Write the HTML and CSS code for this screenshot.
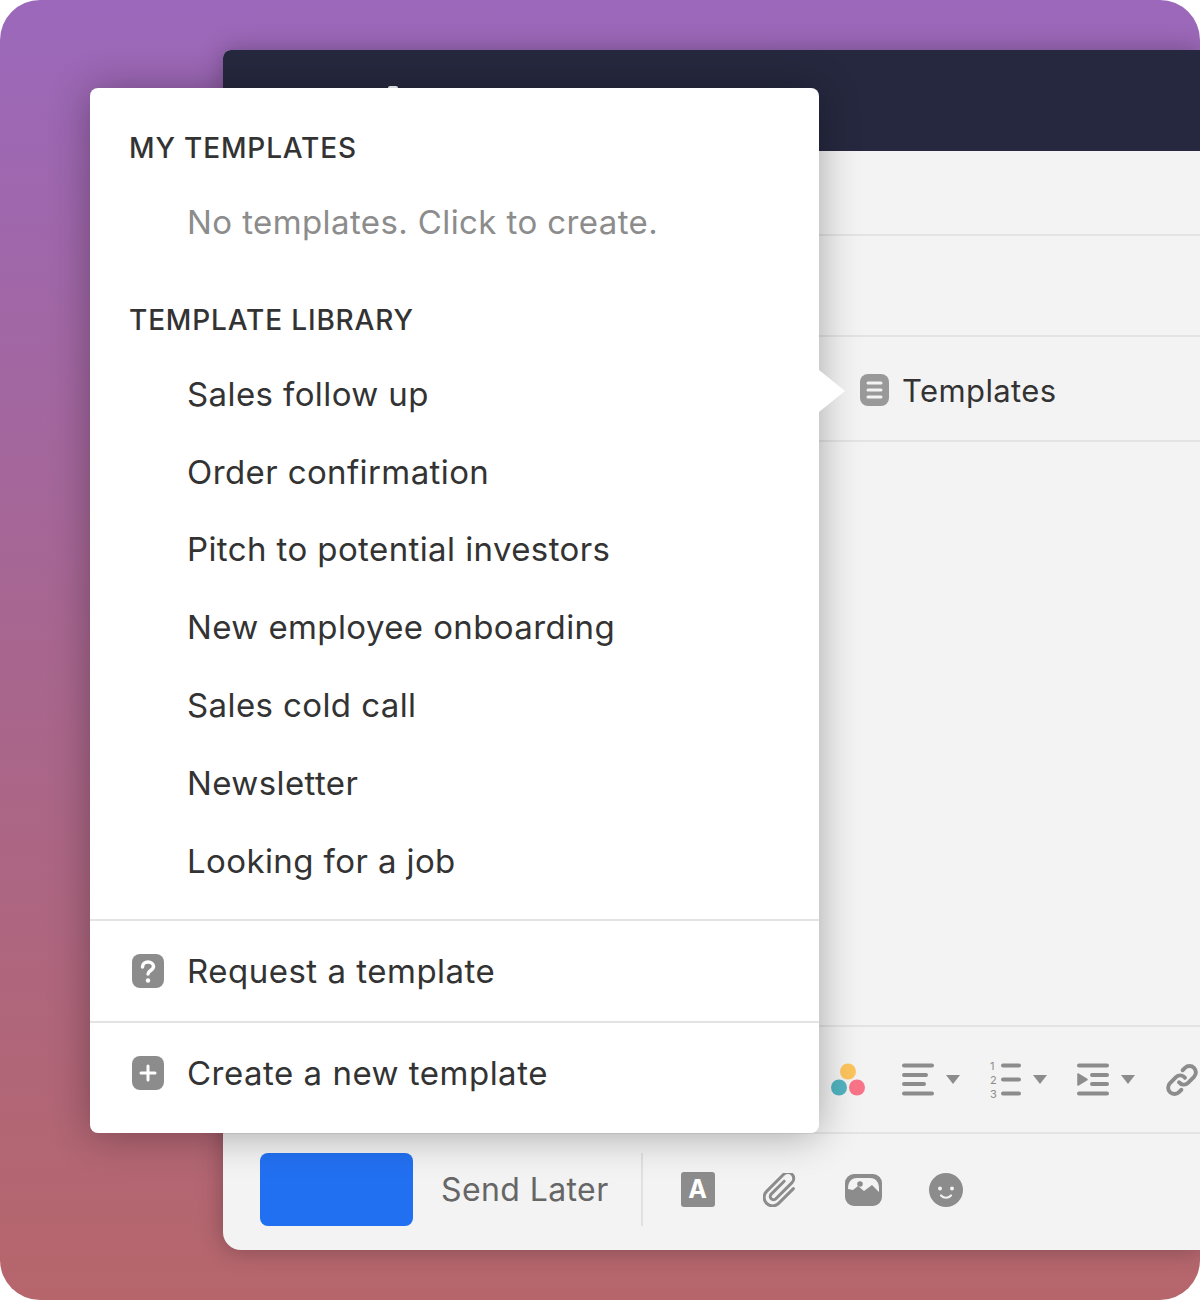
FILE: index.html

```html
<!DOCTYPE html>
<html lang="en">
<head>
    <meta charset="UTF-8">
    <meta name="viewport" content="width=device-width, initial-scale=1.0">
    <title>Templates</title>
    <link rel="stylesheet" href="styles.css">
</head>
<body>
    <div class="stage">
        <div class="window">
            <div class="titlebar"></div>
            <div class="row row-to"></div>
            <div class="row row-subject"></div>
            <div class="row row-templates">
                <svg class="templates-icon" width="29" height="32" viewBox="0 0 29 32">
                    <rect width="29" height="32" rx="8" fill="#999"/>
                    <path d="M8 9h13M8 16h13M8 23h13" stroke="#f3f3f3" stroke-width="3" stroke-linecap="round"/>
                </svg>
                <span>Templates</span>
            </div>
            <div class="row body"></div>
            <div class="row toolbar">
                <svg width="36" height="33" viewBox="0 0 36 33">
                    <circle cx="18" cy="8.500" r="8" fill="#fdc55e"/>
                    <circle cx="9" cy="24.500" r="8" fill="#51b4c0"/>
                    <circle cx="27" cy="24.500" r="8" fill="#f97489"/>
                </svg>
                <div class="tool">
                    <svg width="34" height="33" viewBox="0 0 34 33">
                        <path d="M2 2.500h28M2 12h22M2 21h20M2 30.500h28" stroke="#8c8c8c" stroke-width="4" stroke-linecap="round"/>
                    </svg>
                    <i class="caret"></i>
                </div>
                <div class="tool">
                    <div class="numbers"><span>1</span><span>2</span><span>3</span></div>
                    <svg width="22" height="33" viewBox="0 0 22 33">
                        <path d="M2 2.500h16M2 16.500h16M2 30.500h16" stroke="#8c8c8c" stroke-width="4" stroke-linecap="round"/>
                    </svg>
                    <i class="caret"></i>
                </div>
                <div class="tool">
                    <svg width="34" height="33" viewBox="0 0 34 33">
                        <path d="M2 2.500h28M15 12h15M15 21h15M2 30.500h28" stroke="#8c8c8c" stroke-width="4" stroke-linecap="round"/>
                        <path d="M1 11l9 5.500L1 22z" fill="#8c8c8c" stroke="#8c8c8c" stroke-width="1.500" stroke-linejoin="round"/>
                    </svg>
                    <i class="caret"></i>
                </div>
                <svg class="link-icon" width="36" height="36" viewBox="0 0 24 24" fill="none" stroke="#8c8c8c" stroke-width="2.600" stroke-linecap="round">
                    <path d="M10 13.500a4 4 0 0 0 6 .4l4-4a4.200 4.200 0 0 0-6-6l-1.600 1.600"/>
                    <path d="M14 10.500a4 4 0 0 0-6-.4l-4 4a4.200 4.200 0 0 0 6 6l1.600-1.600"/>
                </svg>
            </div>
            <div class="footer">
                <div class="send-button"></div>
                <span class="send-later">Send Later</span>
                <div class="divider"></div>
                <div class="attach">
                    <div class="format-icon">A</div>
                    <svg width="34" height="34" viewBox="4 4 26 26" fill="none" stroke="#8c8c8c" stroke-width="2.300" stroke-linecap="round" stroke-linejoin="round">
                        <path transform="rotate(45 17 17)" d="M23.500 9v16a6.500 6.500 0 0 1-13 0V6.500a4.500 4.500 0 0 1 9 0V24a2.500 2.500 0 0 1-5 0V10"/>
                    </svg>
                    <svg class="picture-icon" width="37" height="32" viewBox="0 0 37 32">
                        <rect x="1" y="1" width="35" height="30" rx="8" fill="#8c8c8c" stroke="#8c8c8c" stroke-width="2"/>
                        <path d="M3 15c0-7 3-11 9-11h13c6 0 9 4 9 11v3l-7-7-8 6-6-5-5 4-5-1z" fill="#f3f3f3"/>
                        <circle cx="15" cy="10" r="2.800" fill="#8c8c8c"/>
                    </svg>
                    <svg width="34" height="34" viewBox="0 0 34 34">
                        <circle cx="17" cy="17" r="17" fill="#8c8c8c"/>
                        <circle cx="11" cy="15.500" r="2" fill="#f3f3f3"/>
                        <circle cx="23" cy="15.500" r="2" fill="#f3f3f3"/>
                        <path d="M12 22.500c3 3 7 3 10 0" fill="none" stroke="#f3f3f3" stroke-width="2.200" stroke-linecap="round"/>
                    </svg>
                </div>
            </div>
        </div>

        <div class="menu">
            <div class="menu-section">
                <h2>MY TEMPLATES</h2>
                <div class="menu-item empty">No templates. Click to create.</div>
                <h2 class="library-title">TEMPLATE LIBRARY</h2>
                <div class="menu-item">Sales follow up</div>
                <div class="menu-item">Order confirmation</div>
                <div class="menu-item">Pitch to potential investors</div>
                <div class="menu-item">New employee onboarding</div>
                <div class="menu-item">Sales cold call</div>
                <div class="menu-item">Newsletter</div>
                <div class="menu-item">Looking for a job</div>
            </div>
            <div class="menu-action">
                <svg width="32" height="34" viewBox="0 0 32 34">
                    <rect width="32" height="34" rx="8" fill="#8c8c8c"/>
                    <path d="M10.500 13c0-3 2.500-5 5.500-5s5.500 2 5.500 4.500c0 4-5.500 4-5.500 7.500" fill="none" stroke="#fff" stroke-width="3.500" stroke-linecap="round"/>
                    <circle cx="16" cy="26.500" r="2.200" fill="#fff"/>
                </svg>
                <span>Request a template</span>
            </div>
            <div class="menu-action">
                <svg width="32" height="34" viewBox="0 0 32 34">
                    <rect width="32" height="34" rx="8" fill="#8c8c8c"/>
                    <path d="M16 10v14M9 17h14" stroke="#fff" stroke-width="3" stroke-linecap="round"/>
                </svg>
                <span>Create a new template</span>
            </div>
            <div class="menu-arrow"></div>
            <div class="menu-glint"></div>
        </div>
    </div>
</body>
</html>
```

FILE: styles.css

```css
* {
    margin: 0;
    padding: 0;
    box-sizing: border-box;
    font-family: Inter, "Liberation Sans", sans-serif;
}

body {
    background-color: #fff;
}

.stage {
    position: relative;
    height: 1300px;
    padding: 50px 0 50px 223px;
    border-radius: 40px;
    overflow: hidden;
    background: linear-gradient(180deg, #9b68bb 0%, #a8668f 50%, #b6666b 100%);
}

.window {
    display: flex;
    flex-direction: column;
    height: 1200px;
    background-color: #f3f3f3;
    border-radius: 8px 0 0 18px;
    box-shadow: 0 0 24px rgba(0, 0, 0, 0.28);
    overflow: hidden;
}

.titlebar {
    height: 101px;
    background-color: #26283f;
}

.row {
    border-bottom: 2px solid #e3e3e3;
}

.row-to {
    height: 85px;
}

.row-subject {
    height: 101px;
}

.row-templates {
    display: flex;
    align-items: center;
    height: 105px;
    padding: 3px 0 0 637px;
    font-size: 31px;
    letter-spacing: 0.4px;
    color: #333;
}

.templates-icon {
    margin-right: 13px;
}

.body {
    height: 585px;
}

.toolbar {
    display: flex;
    align-items: center;
    gap: 36px;
    height: 107px;
    padding-left: 607px;
    white-space: nowrap;
}

.toolbar svg {
    flex-shrink: 0;
}

.tool {
    display: flex;
    align-items: center;
    gap: 10px;
}

.tool + .tool {
    margin-left: -6px;
}

.caret {
    width: 0;
    height: 0;
    border-left: 7px solid transparent;
    border-right: 7px solid transparent;
    border-top: 9px solid #8c8c8c;
}

.numbers {
    display: flex;
    flex-direction: column;
    justify-content: space-between;
    width: 8px;
    height: 40px;
    margin-right: -7px;
    font-size: 11px;
    line-height: 12px;
    color: #8c8c8c;
}

.link-icon {
    margin-left: -7px;
}

.footer {
    display: flex;
    align-items: center;
    height: 116px;
    padding: 0 0 5px 37px;
}

.send-button {
    width: 153px;
    height: 73px;
    background-color: #2270f2;
    border-radius: 8px;
}

.send-later {
    margin-left: 28px;
    font-size: 32px;
    letter-spacing: 0.4px;
    color: #666;
}

.divider {
    width: 2px;
    height: 73px;
    margin-left: 32px;
    background-color: #e0e0e0;
}

.attach {
    display: flex;
    align-items: center;
    gap: 48px;
    margin-left: 38px;
}

.picture-icon {
    margin-right: -1px;
}

.format-icon {
    width: 34px;
    height: 35px;
    background-color: #8c8c8c;
    border-radius: 3px;
    font-size: 25px;
    font-weight: 700;
    line-height: 35px;
    text-align: center;
    color: #fff;
}

.menu {
    position: absolute;
    left: 90px;
    top: 88px;
    width: 729px;
    height: 1045px;
    background-color: #fff;
    border-radius: 8px;
    box-shadow: 0 2px 40px rgba(0, 0, 0, 0.32);
}

.menu-section {
    height: 831px;
    padding: 40px 0 0 39px;
}

h2 {
    height: 40px;
    margin-bottom: 16px;
    font-size: 28px;
    font-weight: 500;
    line-height: 40px;
    letter-spacing: 0.85px;
    color: #333;
}

.library-title {
    margin-top: 38px;
}

.menu-item {
    height: 77.800px;
    padding-left: 58px;
    font-size: 33px;
    line-height: 77.800px;
    letter-spacing: 0.4px;
    color: #333;
}

.menu-item.empty {
    color: #8c8c8c;
}

.menu-action {
    display: flex;
    align-items: center;
    height: 102px;
    padding-left: 42px;
    border-top: 2px solid #e3e3e3;
    font-size: 33px;
    letter-spacing: 0.5px;
    color: #333;
}

.menu-action span {
    margin-left: 23px;
}

.menu-arrow {
    position: absolute;
    left: 100%;
    top: 282px;
    width: 26px;
    height: 42px;
    background-color: #fff;
    clip-path: polygon(0 0, 100% 50%, 0 100%);
}

.menu-glint {
    position: absolute;
    left: 298px;
    top: -2px;
    width: 10px;
    height: 2px;
    background-color: #d9d9e0;
    border-radius: 2px 2px 0 0;
}
```
